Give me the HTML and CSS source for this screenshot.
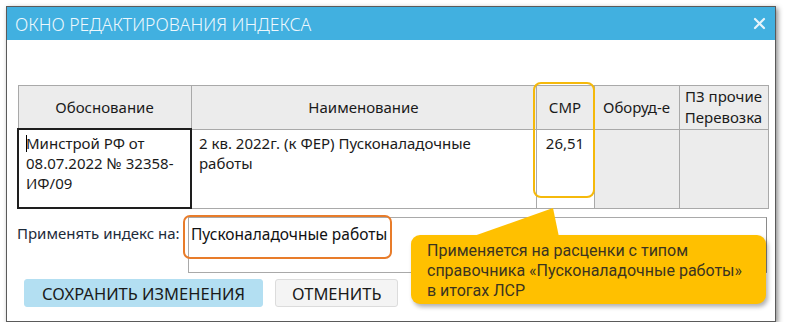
FILE: index.html
```html
<!doctype html>
<html lang="ru">
<head>
    <meta charset="UTF-8">
    <title>Окно редактирования индекса</title>
    <link rel="stylesheet" href="styles.css">
</head>
<body>
<div class="window">
    <div class="titlebar">
        <span class="title">ОКНО РЕДАКТИРОВАНИЯ ИНДЕКСА</span>
        <svg class="close" width="13" height="13" viewBox="0 0 13 13">
            <path d="M2 2 L11 11 M11 2 L2 11" stroke="#e6f4fb" stroke-width="2.2" stroke-linecap="round"/>
        </svg>
    </div>
    <div class="content">
        <div class="grid-wrap">
            <table class="grid">
                <colgroup>
                    <col class="c1"><col class="c2"><col class="c3"><col class="c4"><col class="c5">
                </colgroup>
                <tr class="head">
                    <th>Обоснование</th>
                    <th>Наименование</th>
                    <th>СМР</th>
                    <th>Оборуд-е</th>
                    <th>ПЗ прочие<br>Перевозка</th>
                </tr>
                <tr class="row">
                    <td class="focused"><span class="caret"></span>Минстрой РФ от 08.07.2022 № 32358-ИФ/09</td>
                    <td>2 кв. 2022г. (к ФЕР) Пусконаладочные работы</td>
                    <td class="num">26,51</td>
                    <td class="off"></td>
                    <td class="off"></td>
                </tr>
            </table>
            <!-- выделение колонки СМР -->
            <div class="mark-col"></div>
        </div>

        <div class="apply">
            <span class="apply-label">Применять индекс на:</span>
            <div class="apply-box">Пусконаладочные работы</div>
            <div class="mark-apply"></div>
        </div>

        <div class="buttons">
            <button class="btn primary">СОХРАНИТЬ ИЗМЕНЕНИЯ</button>
            <button class="btn">ОТМЕНИТЬ</button>
        </div>

        <!-- подсказка -->
        <div class="callout">
            <svg class="tail" width="100" height="30" viewBox="0 0 100 30">
                <polygon points="0,30 82,1 88,30" fill="#ffc000"/>
            </svg>
            Применяется на расценки с типом<br>
            справочника «Пусконаладочные работы»<br>
            в итогах ЛСР
        </div>
    </div>
</div>
</body>
</html>
```

FILE: styles.css
```css
html, body {
    margin: 0;
    padding: 0;
    background: #fff;
}
body {
    padding: 6px 0 0 6px;
    font-family: "Noto Sans", "Open Sans", sans-serif;
}
.window {
    position: relative;
    width: 768px;
    height: 314px;
    border: 1px solid #5a5a5a;
    background: #fff;
    box-shadow: 2px 2px 5px rgba(0,0,0,0.45);
}
.titlebar {
    height: 33px;
    background: #41b0e0;
    display: flex;
    align-items: center;
    justify-content: space-between;
    padding: 0 9px 0 8px;
}
.title {
    color: #eef8fd;
    font-size: 17.6px;
    font-weight: 300;
}
.close {
    margin-top: 0px;
}
.content {
    position: relative;
    padding: 45px 8px 0 10px;
}
.grid-wrap {
    position: relative;
}
.grid {
    border-collapse: collapse;
    table-layout: fixed;
    width: 750px;
    font-size: 15px;
    color: #1a1a1a;
}
.c1 { width: 173px; }
.c2 { width: 345px; }
.c3 { width: 58px; }
.c4 { width: 85px; }
.c5 { width: 89px; }
.grid th, .grid td {
    border: 1px solid #a9a9a9;
    padding: 0;
}
.grid th {
    height: 42px;
    background: #ececec;
    font-weight: normal;
    line-height: 21px;
    text-align: center;
    vertical-align: middle;
}
.grid td {
    height: 74px;
    vertical-align: top;
    line-height: 20px;
    padding: 3px 8px 0 7px;
}
.grid td.focused {
    border: 2px solid #1e1e1e;
    padding-left: 7px;
    position: relative;
}
.caret {
    position: absolute;
    left: 7px;
    top: 5px;
    width: 1px;
    height: 17px;
    background: #000;
}
.grid td.num {
    text-align: center;
    padding: 3px 0 0 0;
}
.grid td.off {
    background: #ececec;
}
.mark-col {
    position: absolute;
    left: 516px;
    top: -3px;
    width: 58px;
    height: 112px;
    border: 2px solid #f5b90b;
    border-radius: 8px;
}
.apply {
    position: relative;
    display: flex;
    align-items: flex-start;
    margin-top: 8px;
}
.apply-label {
    width: 171px;
    font-size: 15px;
    color: #1d2b3a;
    padding-top: 6px;
}
.apply-box {
    flex: 1;
    height: 56px;
    border: 1px solid #a9a9a9;
    border-right-color: #8a8a8a;
    font-size: 15.5px;
    color: #111;
    padding: 5px 0 0 2px;
    box-sizing: border-box;
}
.mark-apply {
    position: absolute;
    left: 166px;
    top: -2px;
    width: 205px;
    height: 40px;
    border: 2px solid #e87c2a;
    border-radius: 7px;
}
.buttons {
    display: flex;
    gap: 12px;
    margin: 6px 0 0 7px;
}
.btn {
    height: 28px;
    padding: 0 16px;
    border: 1px solid #dcdcdc;
    border-radius: 3px;
    background: #f4f4f4;
    font-family: "Noto Sans", "Open Sans", sans-serif;
    font-size: 16.5px;
    color: #1a1a1a;
}
.btn.primary {
    width: 239px;
    background: #b3dff2;
    border-color: #b3dff2;
}
.callout {
    position: absolute;
    left: 404px;
    top: 195px;
    width: 355px;
    height: 69px;
    box-sizing: border-box;
    padding: 6px 0 0 16px;
    background: #ffc000;
    border-radius: 9px;
    box-shadow: 2px 3px 4px rgba(0,0,0,0.3);
    font-family: Roboto, sans-serif;
    font-size: 16px;
    line-height: 20px;
    color: #3b3420;
}
.tail {
    position: absolute;
    left: 60px;
    top: -28px;
}
```
